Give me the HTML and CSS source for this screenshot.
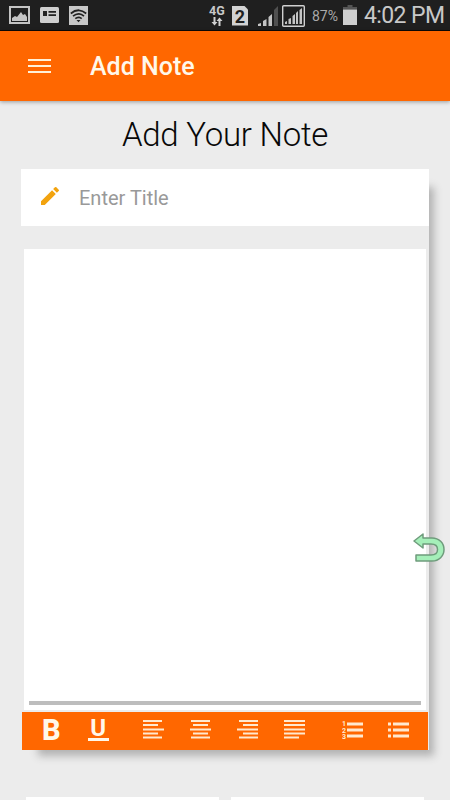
FILE: index.html
```
<!DOCTYPE html>
<html lang="en">
<head>
    <meta charset="UTF-8">
    <meta name="viewport" content="width=device-width, initial-scale=1.0">
    <title>Add Note</title>
    <link rel="stylesheet" href="styles.css">
</head>
<body>
    <!-- Status bar -->
    <div class="status-bar">
        <div class="status-left">
            <svg width="21" height="18" viewBox="0 0 21 18">
                <rect x="1" y="1" width="19" height="16" fill="none" stroke="#c4c4c4" stroke-width="2"/>
                <path d="M3 15v-3l3-2 2 1 4-5 2 3 2-1 2 3v4z" fill="#c4c4c4"/>
            </svg>
            <svg width="19" height="16" viewBox="0 0 19 16">
                <rect width="19" height="16" rx="1.5" fill="#cfcfcf"/>
                <path d="M3 4h4v5H3zM8.500 4H16v1.700H8.500zM8.500 7.300H16V9H8.500z" fill="#222"/>
            </svg>
            <svg width="19" height="19" viewBox="0 0 19 19">
                <rect width="19" height="19" fill="#c8c8c8"/>
                <g fill="none" stroke="#222" stroke-width="1.700">
                    <path d="M1.800 7.500q7.700-6.500 15.400 0"/>
                    <path d="M4 10.200q5.500-4.600 11 0"/>
                    <path d="M6.300 12.700q3.200-2.700 6.400 0"/>
                </g>
                <path d="M7.500 14h4l-2 2.300z" fill="#222"/>
            </svg>
        </div>
        <div class="status-right">
            <div class="network">
                <span>4G</span>
                <svg width="12" height="9" viewBox="0 0 12 9">
                    <path d="M2.500 0h2v5H6.500L3.500 8.500 .5 5h2zM7.500 9h2V4h2L8.500 .5 5.500 4h2z" fill="#d0d0d0"/>
                </svg>
            </div>
            <div class="sim">2</div>
            <svg class="signal" width="21" height="21" viewBox="0 0 21 21">
                <path d="M0 21v-2l3-1v3zM5 21v-5l3.500-2v7zM10.500 21v-9l3.500-3v12z" fill="#c4c4c4"/>
                <path d="M16 21V5l4-4v20z" fill="#505050"/>
            </svg>
            <svg class="signal-box" width="23" height="22" viewBox="0 0 23 22">
                <rect x=".7" y=".7" width="21.600" height="20.600" rx="1" fill="none" stroke="#d0d0d0" stroke-width="1.400"/>
                <path d="M3 19v-2l2-1v3zM6.500 19v-5l2.500-1v6zM10.500 19v-8l2.500-2v10zM14 19V8l2-2v13zM17.500 19V5l2.500-2v16z" fill="#c4c4c4"/>
            </svg>
            <span class="percent">87%</span>
            <svg class="battery" width="14" height="20" viewBox="0 0 14 20">
                <path d="M4.500 0h5v2H14v2.500H0V2h4.500z" fill="#555"/>
                <path d="M0 4.500h14V20H0z" fill="#cfcfcf"/>
            </svg>
            <span class="clock">4:02 PM</span>
        </div>
    </div>

    <header class="app-header">
        <div class="menu-icon">
            <span></span>
            <span></span>
            <span></span>
        </div>
        <div class="app-title">Add Note</div>
    </header>

    <main>
        <h1 class="page-title">Add Your Note</h1>

        <div class="note-card">
            <!-- Title -->
            <div class="title-field">
                <svg class="pencil" width="24" height="24" viewBox="0 0 24 24">
                    <path d="M3 17.250V21h3.750L17.810 9.940l-3.750-3.750L3 17.250zM20.710 7.040a1 1 0 0 0 0-1.410l-2.340-2.340a1 1 0 0 0-1.410 0l-1.830 1.830 3.750 3.750 1.830-1.830z" fill="#f2a30f"/>
                </svg>
                <input type="text" placeholder="Enter Title">
            </div>

            <!-- Note text -->
            <div class="editor">
                <div class="editor-line"></div>
            </div>

            <!-- Formatting -->
            <div class="toolbar">
                <div class="tool-group">
                    <button class="tool bold">B</button>
                    <button class="tool underline"><span>U</span></button>
                </div>
                <div class="tool-group">
                    <button class="tool">
                        <svg width="21" height="20" viewBox="0 0 21 20">
                            <path d="M0 1h19M0 5h15M0 9.500h21M0 13.500h15M0 17.500h19"/>
                        </svg>
                    </button>
                    <button class="tool">
                        <svg width="21" height="20" viewBox="0 0 21 20">
                            <path d="M1 1h19M3 5h15M0 9.500h21M3 13.500h15M1 17.500h19"/>
                        </svg>
                    </button>
                    <button class="tool">
                        <svg width="21" height="20" viewBox="0 0 21 20">
                            <path d="M2 1h19M6 5h15M0 9.500h21M6 13.500h15M2 17.500h19"/>
                        </svg>
                    </button>
                    <button class="tool">
                        <svg width="21" height="20" viewBox="0 0 21 20">
                            <path d="M0 1h21M0 5h21M0 9.500h21M0 13.500h21M0 17.500h15"/>
                        </svg>
                    </button>
                </div>
                <div class="tool-group">
                    <button class="tool list">
                        <svg width="21" height="20" viewBox="0 0 21 20">
                            <path d="M5 4h16M5 10h16M5 16h16"/>
                            <text x="0" y="6">1</text>
                            <text x="0" y="12.500">2</text>
                            <text x="0" y="19">3</text>
                        </svg>
                    </button>
                    <button class="tool list">
                        <svg width="21" height="20" viewBox="0 0 21 20">
                            <path d="M0 4h3M5 4h16M0 10h3M5 10h16M0 16h3M5 16h16"/>
                        </svg>
                    </button>
                </div>
            </div>
        </div>

        <div class="bottom-cards">
            <div class="bottom-card"></div>
            <div class="bottom-card"></div>
        </div>
    </main>

    <!-- Floating back button -->
    <svg class="back-button" width="32" height="30" viewBox="0 0 32 30">
        <path d="M1 8L10 1v4h9C26 5 31 10 31 16.500S26 28 19 28H3v-6h15c4 0 6.500-2 6.500-5.500S22 11 18 11h-8v4z" fill="#a5efb9" stroke="#6f9c7c" stroke-width="1.500" stroke-linejoin="round"/>
    </svg>
</body>
</html>
```
FILE: styles.css
```
/* Base */
* {
    margin: 0;
    padding: 0;
    box-sizing: border-box;
    font-family: Roboto, 'Liberation Sans', sans-serif;
}

body {
    height: 800px;
    background-color: #ececec;
    overflow: hidden;
    position: relative;
}

svg {
    display: block;
    flex-shrink: 0;
}

/* Status bar */
.status-bar {
    display: flex;
    justify-content: space-between;
    height: 31px;
    padding: 0 6px 0 9px;
    background-color: #1f1f1f;
    border-bottom: 1px solid #0b0705;
    color: #c8c8c8;
}

.status-left,
.status-right {
    display: flex;
    align-items: center;
}

.status-left {
    gap: 10px;
}

.network {
    width: 16px;
    margin-right: 7px;
    font-size: 12.5px;
    font-weight: bold;
    line-height: 12px;
}

.network svg {
    margin: 0 0 0 2px;
}

.sim {
    width: 16px;
    height: 20px;
    margin: 1px 10px 0 0;
    background-color: #d2d2d2;
    color: #1f1f1f;
    font-size: 18px;
    font-weight: bold;
    line-height: 21px;
    text-align: center;
    clip-path: polygon(0 0, 75% 0, 100% 20%, 100% 100%, 0 100%);
}

.signal {
    margin: 1px 3px 0 0;
}

.signal-box {
    margin: 1px 7px 0 0;
}

.percent {
    width: 27px;
    margin: 1px 4px 0 0;
    font-size: 14px;
    white-space: nowrap;
    color: #aaa;
}

.battery {
    margin-right: 7px;
}

.clock {
    width: 80px;
    font-size: 23px;
    letter-spacing: -0.6px;
    white-space: nowrap;
}

/* Header */
.app-header {
    display: flex;
    align-items: center;
    height: 70px;
    padding-left: 28px;
    background-color: #ff6700;
    box-shadow: 0 1px 4px rgba(0, 0, 0, 0.35);
    color: #fff8ea;
}

.menu-icon {
    display: flex;
    flex-direction: column;
    gap: 3.5px;
    width: 23px;
    margin-right: 39px;
}

.menu-icon span {
    height: 2.5px;
    background-color: #fff1d9;
}

.app-title {
    font-size: 25px;
    font-weight: 500;
}

/* Content */
.page-title {
    height: 68px;
    line-height: 68px;
    font-size: 33px;
    font-weight: 300;
    letter-spacing: -0.25px;
    text-align: center;
    color: #080808;
}

.note-card {
    width: 408px;
    height: 581px;
    margin-left: 21px;
    background-color: #ececec;
    box-shadow: 11px 12px 8px -6px #b2b2b2;
}

.title-field {
    display: flex;
    align-items: center;
    height: 57px;
    padding-left: 17px;
    background-color: #fff;
}

.title-field input {
    width: 300px;
    margin: 1px 0 0 17px;
    border: none;
    outline: none;
    font-size: 20px;
}

.title-field input::placeholder {
    color: #999;
}

.pencil {
    margin-top: -3px;
}

/* Editor */
.editor {
    display: flex;
    align-items: flex-end;
    height: 461px;
    margin: 23px 3px 0;
    padding: 0 5px 5px;
    background-color: #fff;
}

.editor-line {
    width: 100%;
    height: 4px;
    background-color: #bdbdbd;
}

/* Toolbar */
.toolbar {
    display: flex;
    width: 406px;
    height: 38px;
    margin: 2px 0 0 1px;
    padding-left: 6px;
    background-color: #ff6700;
}

.tool-group {
    display: flex;
    margin-right: 9px;
}

.tool-group:nth-child(2) {
    margin-right: 11px;
}

.tool {
    display: flex;
    align-items: center;
    justify-content: center;
    width: 46.8px;
    height: 36px;
    border: none;
    background: none;
    color: #fff8ea;
}

.tool path {
    stroke: #ffe9cf;
    stroke-width: 2;
}

.tool text {
    fill: #ffe9cf;
    font-size: 7px;
    font-weight: bold;
}

.list path {
    stroke-width: 3;
}

.bold {
    font-size: 29px;
    font-weight: 800;
}

.underline span {
    width: 21px;
    height: 22px;
    border-bottom: 3px solid #fff8ea;
    font-size: 24px;
    font-weight: bold;
    line-height: 18px;
}

.bottom-cards {
    display: flex;
    gap: 12px;
    margin: 47px 0 0 26px;
}

.bottom-card {
    width: 193px;
    height: 30px;
    background-color: #fff;
}

/* Floating back button */
.back-button {
    position: absolute;
    left: 413px;
    top: 533px;
}
```
